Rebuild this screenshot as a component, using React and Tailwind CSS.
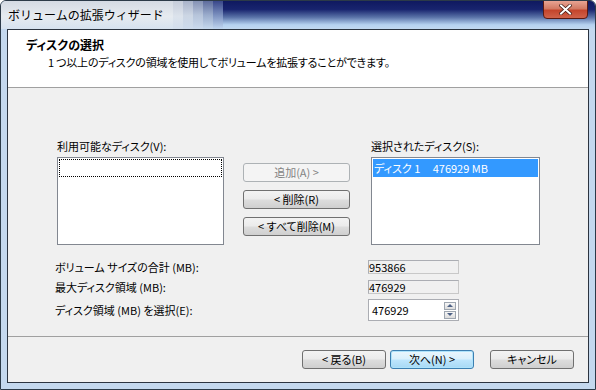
const font = "font-['Noto_Sans_CJK_JP','Noto_Sans',sans-serif] [font-feature-settings:'palt']";

function Button({ children, width = 'w-[107px]', disabled, primary }) {
  let cls = 'border-[#707070] bg-[linear-gradient(to_bottom,#f3f3f3_0%,#ebebeb_48%,#dddddd_52%,#cfcfcf_100%)] text-black';
  if (disabled) cls = 'border-[#adb2b5] bg-[#f4f4f4] text-[#838383]';
  if (primary) cls = 'border-[#3c7fb1] bg-[linear-gradient(to_bottom,#eaf6fd_0%,#d9f0fc_48%,#bee6fd_52%,#a7d9f5_100%)] text-black shadow-[inset_0_0_0_1px_#aee3fb]';
  return (
    <div className={`${width} h-[19px] flex items-center justify-center rounded-[3px] border text-[11px] leading-none ${cls}`}>
      {children}
    </div>
  );
}

export default function App() {
  return (
    <div className={`w-[596px] h-[390px] relative overflow-hidden ${font} flex flex-col rounded-t-[6px] border border-[#2c3a48] bg-[#c4d8ee]`}>
      {/* title bar */}
      <div className="h-[28px] shrink-0 flex">
        <div className="w-[172px] flex items-center pl-[7px] bg-[linear-gradient(to_bottom,#d4dae3,#e6ebf0_55%,#d6e2ef)]">
          <span className="text-[12px] text-black leading-none whitespace-nowrap [font-feature-settings:normal]">ボリュームの拡張ウィザード</span>
        </div>
        <div className="w-[10px] bg-[linear-gradient(to_bottom,#c6cdda,#dce3ec_55%,#d2deed)]" />
        <div className="w-[10px] bg-[linear-gradient(to_bottom,#a9b3c9,#ccd6e4_52%,#cddbed)]" />
        <div className="w-[10px] bg-[linear-gradient(to_bottom,#8592b4,#b6c4da_50%,#cadaee)]" />
        <div className="w-[10px] bg-[linear-gradient(to_bottom,#5e6c9c,#9aaccc_50%,#c6d9ef)]" />
        <div className="w-[10px] bg-[linear-gradient(to_bottom,#39478a,#7d92c0_52%,#c0d6f0)]" />
        <div className="flex-1 bg-[linear-gradient(to_bottom,#0f1960_0%,#18246e_30%,#5a73a8_58%,#b6d2f0_85%,#c2d8f0_100%)]" />
      </div>
      {/* close button */}
      <div className="absolute top-[-1px] right-[7px] w-[45px] h-[19px] rounded-b-[4px] border border-[#5a1a12] bg-[linear-gradient(to_bottom,#e8a493_0%,#d27a64_45%,#c4452c_55%,#d0624a_100%)] flex items-center justify-center">
        <svg width="13" height="11" viewBox="0 0 13 11">
          <path d="M2 1.5 L11 9.5 M11 1.5 L2 9.5" stroke="#3b1510" strokeWidth="3.4" strokeLinecap="square" />
          <path d="M2 1.5 L11 9.5 M11 1.5 L2 9.5" stroke="#ffffff" strokeWidth="2" strokeLinecap="square" />
        </svg>
      </div>

      {/* client area */}
      <div className="flex-1 mx-[6px] mb-[6px] border border-[#2b3440] bg-[#f0f0f0] flex flex-col">
        {/* header */}
        <div className="h-[58px] shrink-0 bg-white border-b border-[#a0a0a0] pl-[18px] pt-[7px]">
          <div className="text-[12px] font-bold leading-[16px] text-black">ディスクの選択</div>
          <div className="text-[11px] leading-[16px] text-black pl-[22px] mt-[1px] tracking-[-0.2px]">1 つ以上のディスクの領域を使用してボリュームを拡張することができます。</div>
        </div>

        {/* body */}
        <div className="flex-1 pl-[49px] pt-[51px] text-[11px] text-black">
          <div className="flex">
            <div className="w-[167px]">
              <div className="leading-[14px] h-[18px]">利用可能なディスク(V):</div>
              <div className="h-[88px] bg-white border border-[#828790] p-[1px]">
                <div className="h-[18px] border border-dotted border-black" />
              </div>
            </div>
            <div className="ml-[19px] pt-[24px] flex flex-col gap-[8px]">
              <Button disabled>追加(A) &gt;</Button>
              <Button>&lt; 削除(R)</Button>
              <Button>&lt; すべて削除(M)</Button>
            </div>
            <div className="ml-[21px] w-[169px]">
              <div className="leading-[14px] h-[18px]">選択されたディスク(S):</div>
              <div className="h-[88px] bg-white border border-[#828790] p-[1px]">
                <div className="h-[18px] bg-[#3399ff] text-white leading-[18px] pl-[1px] whitespace-pre">ディスク 1     476929 MB</div>
              </div>
            </div>
          </div>

          <div className="mt-[15px] flex flex-col">
            <div className="flex items-center h-[14px]">
              <div className="w-[313px] -ml-[2px]">ボリューム サイズの合計 (MB):</div>
              <div className="w-[91px] h-[14px] border border-[#c8c8c8] border-t-[#abadb3] border-l-[#abadb3] bg-[#f0f0f0] leading-[12px]">953866</div>
            </div>
            <div className="flex items-center h-[14px] mt-[6px]">
              <div className="w-[313px] -ml-[2px]">最大ディスク領域 (MB):</div>
              <div className="w-[91px] h-[14px] border border-[#c8c8c8] border-t-[#abadb3] border-l-[#abadb3] bg-[#f0f0f0] leading-[12px]">476929</div>
            </div>
            <div className="flex items-center h-[22px] mt-[5px]">
              <div className="w-[313px] -ml-[2px]">ディスク領域 (MB) を選択(E):</div>
              <div className="w-[91px] h-[22px] border border-[#abadb3] bg-white flex items-center justify-between pl-[3px] pr-[2px]">
                <span className="leading-none">476929</span>
                <div className="flex flex-col gap-[1px]">
                  <div className="w-[12px] h-[8px] border border-[#9ea6b0] bg-[linear-gradient(to_bottom,#f7f7f7,#dcdcdc)] flex items-center justify-center">
                    <svg width="6" height="3" viewBox="0 0 6 3"><path d="M0 3 L3 0 L6 3 Z" fill="#4d6185" /></svg>
                  </div>
                  <div className="w-[12px] h-[8px] border border-[#9ea6b0] bg-[linear-gradient(to_bottom,#f7f7f7,#dcdcdc)] flex items-center justify-center">
                    <svg width="6" height="3" viewBox="0 0 6 3"><path d="M0 0 L6 0 L3 3 Z" fill="#4d6185" /></svg>
                  </div>
                </div>
              </div>
            </div>
          </div>
        </div>

        {/* footer */}
        <div className="h-[46px] shrink-0 border-t border-[#a0a0a0] flex items-start justify-end pr-[14px] pt-[13px] gap-[4px]">
          <Button width="w-[84px]">&lt; 戻る(B)</Button>
          <Button width="w-[84px]" primary>次へ(N) &gt;</Button>
          <div className="ml-[12px]">
            <Button width="w-[84px]">キャンセル</Button>
          </div>
        </div>
      </div>
    </div>
  );
}
